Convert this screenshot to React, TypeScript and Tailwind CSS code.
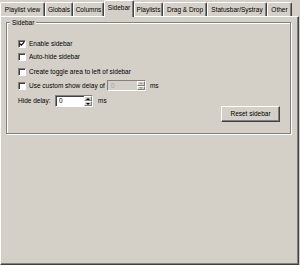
import React from 'react';

const tabs = [
    { label: 'Playlist view', w: 'w-[45px]' },
    { label: 'Globals', w: 'w-[28px]' },
    { label: 'Columns', w: 'w-[31px]' },
    { label: 'Sidebar', w: 'w-[30px]', active: true },
    { label: 'Playlists', w: 'w-[29px]' },
    { label: 'Drag & Drop', w: 'w-[44px]' },
    { label: 'Statusbar/Systray', w: 'w-[60px]' },
    { label: 'Other', w: 'w-[25px]' },
];

const CheckBox: React.FC<{ checked?: boolean; label: string }> = ({ checked, label }) => (
    <div className="flex items-center gap-[3px]">
        <div className="w-[8px] h-[8px] bg-white border-t border-l border-t-[#808080] border-l-[#808080] border-r border-b border-r-white border-b-white shadow-[inset_1px_1px_0_#404040] flex items-center justify-center">
            {checked && (
                <svg width="6" height="6" viewBox="0 0 6 6">
                    <path d="M0.8 2.6 L2.3 4.1 L5.2 1.1" stroke="#000" strokeWidth="1.2" fill="none" />
                </svg>
            )}
        </div>
        <span>{label}</span>
    </div>
);

const SpinBox: React.FC<{ disabled?: boolean; width: string; height: string }> = ({ disabled, width, height }) => (
    <div className={`${width} ${height} flex border-t border-l border-t-[#808080] border-l-[#808080] border-r border-b border-r-white border-b-white ${disabled ? 'bg-[#d4d0c8]' : 'bg-white shadow-[inset_1px_1px_0_#404040]'}`}>
        <div className={`flex-1 pl-[3px] flex items-center ${disabled ? 'text-[#a0a0a0]' : 'text-black'}`}>0</div>
        <div className="w-[8px] flex flex-col">
            <div className="flex-1 bg-[#d4d0c8] border-t border-l border-white border-r border-b border-r-[#808080] border-b-[#808080] flex items-center justify-center">
                <svg width="4" height="2" viewBox="0 0 4 2"><path d="M0 2 L2 0 L4 2 Z" fill={disabled ? '#a0a0a0' : '#000'} /></svg>
            </div>
            <div className="flex-1 bg-[#d4d0c8] border-t border-l border-white border-r border-b border-r-[#808080] border-b-[#808080] flex items-center justify-center">
                <svg width="4" height="2" viewBox="0 0 4 2"><path d="M0 0 L2 2 L4 0 Z" fill={disabled ? '#a0a0a0' : '#000'} /></svg>
            </div>
        </div>
    </div>
);

const App: React.FC = () => {
    return (
        <div className="w-[300px] h-[265px] bg-[#d4d0c8] text-black text-[6.5px] leading-[8px] font-['Liberation_Sans',Arial,sans-serif] flex flex-col">
            <div className="h-[16px] flex items-end">
                {tabs.map(tab => (
                    <div
                        key={tab.label}
                        className={`${tab.w} relative flex items-center justify-center bg-[#d4d0c8] border-t border-l border-white border-r border-r-[#404040] rounded-t-[2px] shadow-[inset_-1px_0_0_#808080] ${tab.active ? 'h-[17px] -mb-px z-10 pb-[2px]' : 'h-[14px]'}`}
                    >
                        {tab.label}
                    </div>
                ))}
            </div>
            <div className="w-[299px] h-[249px] border-t border-l border-white border-r border-b border-r-[#404040] border-b-[#404040] shadow-[inset_-1px_-1px_0_#808080]">
                <div className="relative ml-[5px] mt-[5px] w-[285px] h-[112px] border border-[#808080] shadow-[inset_1px_1px_0_#fff,1px_1px_0_#fff] pt-[14px] pl-[11px] pr-[10px]">
                    <span className="absolute left-[3px] -top-[5px] px-[2px] bg-[#d4d0c8] leading-[9px]">Sidebar</span>
                    <div className="h-[13px] flex items-center"><CheckBox checked label="Enable sidebar" /></div>
                    <div className="h-[13px] flex items-center"><CheckBox label="Auto-hide sidebar" /></div>
                    <div className="h-[13px] mt-[2px] flex items-center"><CheckBox label="Create toggle area to left of sidebar" /></div>
                    <div className="h-[13px] mt-[1px] flex items-center">
                        <CheckBox label="Use custom show delay of" />
                        <div className="ml-[2px]"><SpinBox disabled width="w-[39px]" height="h-[11px]" /></div>
                        <span className="ml-[4px]">ms</span>
                    </div>
                    <div className="h-[12px] mt-[3px] flex items-center">
                        <span className="w-[37px]">Hide delay:</span>
                        <SpinBox width="w-[38px]" height="h-[12px]" />
                        <span className="ml-[5px]">ms</span>
                    </div>
                    <div className="-mt-px flex justify-end">
                        <button className="w-[59px] h-[16px] bg-[#d4d0c8] border-t border-l border-white border-r border-b border-r-[#404040] border-b-[#404040] shadow-[inset_-1px_-1px_0_#808080] flex items-center justify-center">
                            Reset sidebar
                        </button>
                    </div>
                </div>
            </div>
        </div>
    );
};

export default App;
